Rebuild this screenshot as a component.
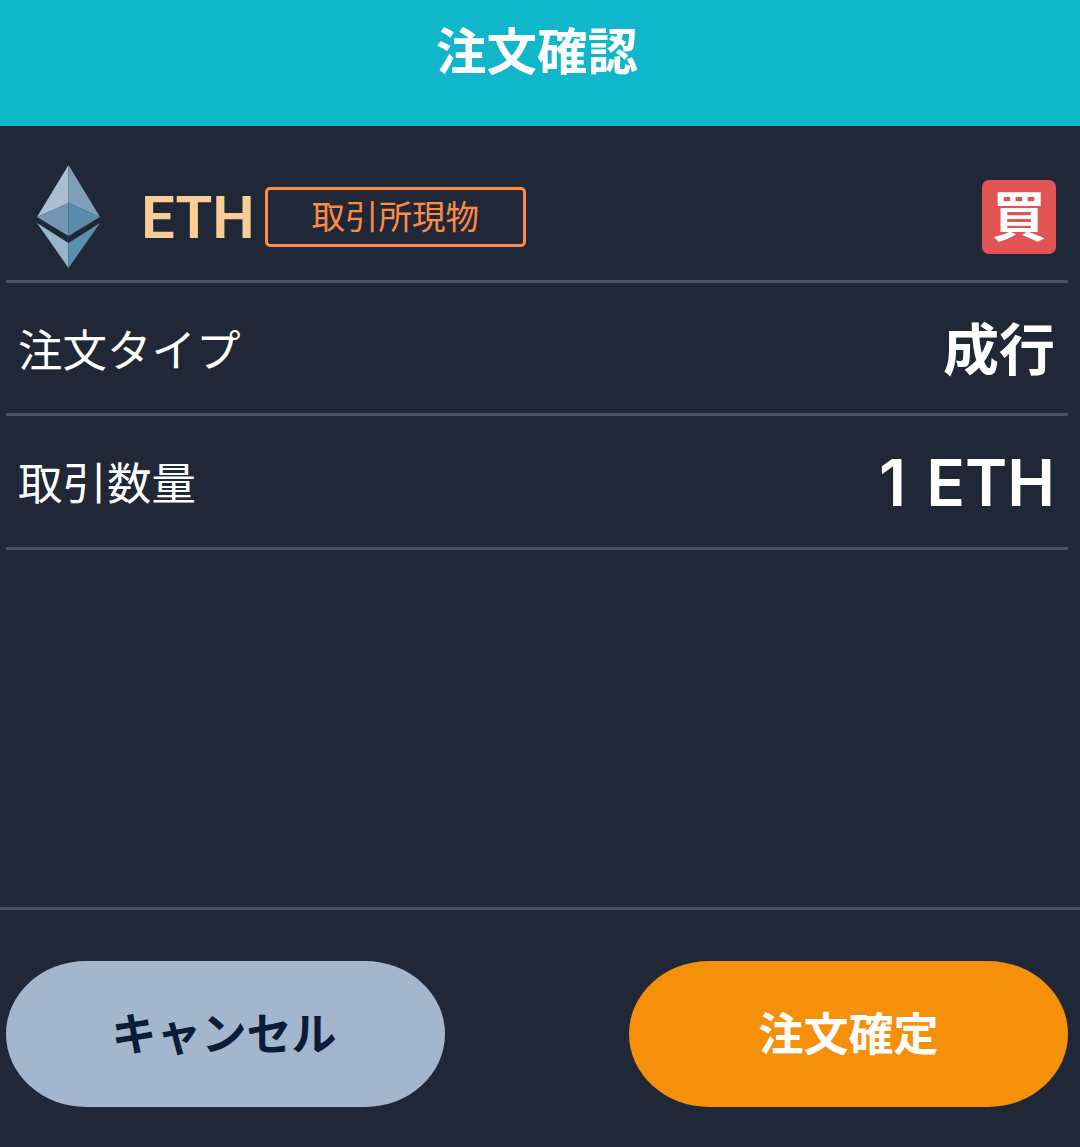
<div class="screen">
  <header class="head">注文確認</header>
  <main class="body">
    <section class="row asset">
      <svg class="eth" viewBox="0 0 64 104" width="63" height="104" preserveAspectRatio="none" aria-label="ETH">
        <polygon points="32,0 32,38 0,52" fill="#a9c0d3"/>
        <polygon points="32,0 32,38 64,52" fill="#7e9fb8"/>
        <polygon points="0,52 32,38 32,71" fill="#7297b5"/>
        <polygon points="64,52 32,38 32,71" fill="#5a8bab"/>
        <polygon points="0,58 32,78 32,103" fill="#94b5ca"/>
        <polygon points="64,58 32,78 32,103" fill="#5a8fae"/>
      </svg>
      <span class="sym">ETH</span>
      <span class="tag">取引所現物</span>
      <span class="buy">買</span>
    </section>
    <section class="row info type">
      <span class="label">注文タイプ</span>
      <span class="value jp">成行</span>
    </section>
    <section class="row info">
      <span class="label">取引数量</span>
      <span class="value">1 ETH</span>
    </section>
  </main>
  <footer class="foot">
    <button class="btn cancel">キャンセル</button>
    <button class="btn ok">注文確定</button>
  </footer>
</div>

<style>
  :global(body) {
    margin: 0;
    background: #202737;
  }
  .screen {
    width: 1080px;
    height: 1147px;
    display: flex;
    flex-direction: column;
    background: #202737;
    color: #fff;
    font-family: "Noto Sans CJK JP", "Noto Sans", sans-serif;
  }
  .head {
    height: 126px;
    flex: none;
    box-sizing: border-box;
    padding: 0 6px 30px 0;
    background: #10b7cb;
    display: flex;
    align-items: center;
    justify-content: center;
    font-size: 50.5px;
    font-weight: 700;
  }
  .body {
    flex: 1;
    padding: 0 12px 0 6px;
  }
  .row {
    display: flex;
    align-items: center;
    border-bottom: 3px solid #445367;
    box-sizing: border-box;
  }
  .asset {
    height: 157px;
    padding: 30px 12px 0 31px;
  }
  .eth {
    flex: none;
    margin-top: -2px;
  }
  .sym {
    margin-left: 41px;
    font-family: Roboto, "Noto Sans", sans-serif;
    font-size: 60px;
    font-weight: 600;
    color: #f9cd96;
    line-height: 1;
  }
  .tag {
    margin-left: 10px;
    width: 261px;
    height: 60px;
    box-sizing: border-box;
    border: 3px solid #fa8c46;
    border-radius: 5px;
    padding-bottom: 5px;
    color: #fa8c46;
    font-size: 33.5px;
    display: flex;
    align-items: center;
    justify-content: center;
    margin-top: -2px;
  }
  .buy {
    margin-left: auto;
    width: 74px;
    height: 74px;
    box-sizing: border-box;
    padding-bottom: 8px;
    border-radius: 7px;
    background: #e25454;
    color: #fff;
    font-size: 54px;
    font-weight: 700;
    display: flex;
    align-items: center;
    justify-content: center;
    margin-top: -2px;
  }
  .info {
    height: 134px;
    justify-content: space-between;
    padding: 0 13px;
  }
  .info.type {
    height: 133px;
  }
  .label {
    font-size: 44.5px;
    margin: -2px 0 0 -1px;
  }
  .value {
    font-family: Inter, "Noto Sans", sans-serif;
    font-size: 64px;
    font-weight: 600;
    word-spacing: 4px;
    margin-top: 2px;
  }
  .value.jp {
    font-family: "Noto Sans CJK JP", sans-serif;
    font-size: 56px;
    font-weight: 700;
    margin-top: -5px;
  }
  .foot {
    flex: none;
    height: 240px;
    box-sizing: border-box;
    border-top: 3px solid #445367;
    padding: 51px 12px 0 6px;
    display: flex;
    justify-content: space-between;
    align-items: flex-start;
  }
  .btn {
    width: 439px;
    height: 146px;
    border: 0;
    border-radius: 80px / 73px;
    font-family: inherit;
    font-size: 45px;
    font-weight: 700;
    padding: 0 0 6px;
  }
  .cancel {
    background: #a4b6cd;
    color: #0a1c38;
    padding-right: 3px;
  }
  .ok {
    background: #f6900b;
    color: #fff;
  }
</style>
